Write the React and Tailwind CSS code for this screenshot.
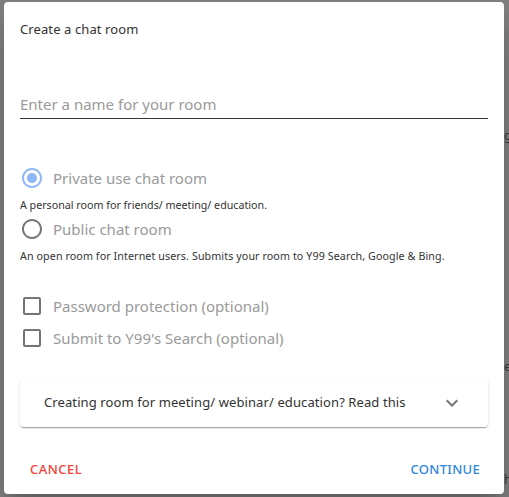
import React from "react";

const font = { fontFamily: '"Noto Sans", "Open Sans", Arial, sans-serif' };

function RadioIcon({ checked }) {
  return (
    <svg width="24" height="24" viewBox="0 0 24 24" className="shrink-0">
      <path
        fill={checked ? "#8fb6f8" : "#757575"}
        d="M12 2C6.48 2 2 6.48 2 12s4.48 10 10 10 10-4.48 10-10S17.52 2 12 2zm0 18c-4.42 0-8-3.58-8-8s3.58-8 8-8 8 3.58 8 8-3.58 8-8 8z"
      />
      {checked && (
        <path fill="#8fb6f8" d="M12 7c-2.76 0-5 2.24-5 5s2.24 5 5 5 5-2.24 5-5-2.24-5-5-5z" />
      )}
    </svg>
  );
}

function CheckIcon() {
  return (
    <svg width="24" height="24" viewBox="0 0 24 24" className="shrink-0">
      <path
        fill="#757575"
        d="M19 5v14H5V5h14m0-2H5c-1.1 0-2 .9-2 2v14c0 1.1.9 2 2 2h14c1.1 0 2-.9 2-2V5c0-1.1-.9-2-2-2z"
      />
    </svg>
  );
}

export default function App() {
  return (
    <div className="relative w-[509px] h-[497px] overflow-hidden bg-[#7f7f7f]" style={font}>
      {/* backdrop fragments */}
      <span className="absolute left-[504px] top-[126px] text-[13px] text-[#3a3a3a]">g</span>
      <span className="absolute left-[504px] top-[357px] text-[13px] text-[#3a3a3a]">e</span>
      <span className="absolute left-[504px] top-[470px] text-[13px] text-[#3a3a3a]">h</span>

      <div className="absolute left-[4px] top-[2px] w-[500px] h-[492px] bg-white rounded-[4px] shadow-[0_11px_15px_-7px_rgba(0,0,0,0.2),0_24px_38px_3px_rgba(0,0,0,0.14)] px-[16px] flex flex-col">
        <div className="mt-[17px] h-[20px] leading-[20px] text-[13px] text-[#333] tracking-[0.1px]">Create a chat room</div>

        <div className="mt-[54px] border-b border-[#333] pb-[3px]">
          <div className="h-[22px] leading-[22px] text-[15px] text-[#9a9a9a]">Enter a name for your room</div>
        </div>

        <div className="mt-[47px] flex items-center h-[24px] gap-[9px]">
          <RadioIcon checked />
          <span className="text-[15px] text-[#9a9a9a]">Private use chat room</span>
        </div>
        <div className="mt-[7px] h-[16px] leading-[16px] text-[10.7px] text-[#333]">
          A personal room for friends/ meeting/ education.
        </div>

        <div className="mt-[4px] flex items-center h-[24px] gap-[9px]">
          <RadioIcon />
          <span className="text-[15px] text-[#9a9a9a]">Public chat room</span>
        </div>
        <div className="mt-[7px] h-[16px] leading-[16px] text-[10.7px] text-[#333] tracking-[0.1px]">
          An open room for Internet users. Submits your room to Y99 Search, Google &amp; Bing.
        </div>

        <div className="mt-[30px] flex items-center h-[24px] gap-[9px]">
          <CheckIcon />
          <span className="text-[15px] text-[#9a9a9a]">Password protection (optional)</span>
        </div>
        <div className="mt-[8px] flex items-center h-[24px] gap-[9px]">
          <CheckIcon />
          <span className="text-[15px] text-[#9a9a9a]">Submit to Y99's Search (optional)</span>
        </div>

        <div className="mt-[29px] h-[48px] rounded-[4px] bg-white shadow-[0_2px_1px_-1px_rgba(0,0,0,0.2),0_1px_1px_0_rgba(0,0,0,0.14),0_1px_3px_0_rgba(0,0,0,0.12)] flex items-center pl-[24px] pr-[24px]">
          <span className="flex-1 text-[13px] text-[#333] tracking-[0.1px]">Creating room for meeting/ webinar/ education? Read this</span>
          <svg width="24" height="24" viewBox="0 0 24 24">
            <path fill="#757575" d="M16.59 8.59 12 13.17 7.41 8.59 6 10l6 6 6-6z" />
          </svg>
        </div>

        <div className="mt-[33px] flex items-center justify-between h-[20px] pl-[10px] pr-[8px]">
          <span className="text-[13px] font-medium text-[#f44336] tracking-[0.5px]">CANCEL</span>
          <span className="text-[13px] font-medium text-[#2f86e0] tracking-[0.3px]">CONTINUE</span>
        </div>
      </div>
    </div>
  );
}
